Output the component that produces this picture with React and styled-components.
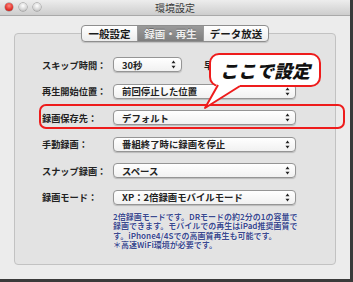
import React from "react";
import styled, { createGlobalStyle, css } from "styled-components";

const GlobalStyle = createGlobalStyle`
  html, body {
    margin: 0;
    padding: 0;
    background: #3a3a3a;
    font-family: "Noto Sans CJK JP", "Noto Sans", sans-serif;
  }
`;

const Window = styled.div`
  width: 350px;
  height: 279px;
  background: #ececec;
  display: flex;
  flex-direction: column;
  align-items: center;
  overflow: hidden;
`;

const TitleBar = styled.div`
  position: relative;
  width: 100%;
  height: 16px;
  display: flex;
  align-items: center;
  justify-content: center;
  background: linear-gradient(#ededed, #cdcdcd);
  border-bottom: 1px solid #a9a9a9;
  box-sizing: border-box;
`;

const Lights = styled.div`
  position: absolute;
  left: 5px;
  top: 3px;
  display: flex;
  gap: 6px;
`;

const Light = styled.span`
  width: 8px;
  height: 8px;
  border-radius: 50%;
  background: ${(p) =>
    p.$red
      ? "radial-gradient(circle at 50% 35%, #ff8a80, #e0302a 60%, #a5120e)"
      : "radial-gradient(circle at 50% 35%, #ffffff, #d4d4d4 60%, #9c9c9c)"};
  box-shadow: 0 0 0 0.5px #8a8a8a;
`;

const Title = styled.div`
  font-size: 10px;
  color: #3a3a3a;
`;

const Tabs = styled.div`
  position: relative;
  z-index: 2;
  display: flex;
  margin-top: 9px;
  height: 17px;
  border: 1px solid #8e8e8e;
  border-radius: 4px;
  box-sizing: border-box;
  background: linear-gradient(#ffffff, #ececec);
  box-shadow: 0 1px 1px rgba(0, 0, 0, 0.15);
  overflow: hidden;
`;

const Tab = styled.div`
  width: ${(p) => p.$w}px;
  display: flex;
  align-items: center;
  justify-content: center;
  font-size: 10.5px;
  font-weight: 700;
  color: #1a1a1a;
  & + & {
    border-left: 1px solid #9a9a9a;
  }
  ${(p) =>
    p.$active &&
    css`
      background: linear-gradient(#9a9a9a, #7e7e7e);
      color: #eeeeee;
      text-shadow: 0 -1px 0 rgba(0, 0, 0, 0.3);
    `}
`;

const Group = styled.div`
  position: relative;
  margin-top: -9px;
  width: 322px;
  height: 232px;
  box-sizing: border-box;
  padding: 23px 0 0 27px;
  background: #e3e3e3;
  border: 1px solid #c2c2c2;
  border-radius: 4px;
  display: flex;
  flex-direction: column;
  gap: 11.6px;
`;

const Row = styled.div`
  position: relative;
  display: flex;
  align-items: center;
  height: 15px;
  ${(p) =>
    p.$highlight &&
    css`
      &::before {
        content: "";
        position: absolute;
        left: -3px;
        right: -10px;
        top: -6px;
        bottom: -4px;
        border: 2px solid #ee1c1c;
        border-radius: 7px;
      }
    `}
`;

const Label = styled.div`
  width: 71px;
  flex: none;
  font-size: 9.2px;
  font-weight: 700;
  color: #222;
  white-space: nowrap;
`;

const SideLabel = styled(Label)`
  width: auto;
  margin-left: 22px;
`;

const Select = styled.div`
  width: ${(p) => p.$w}px;
  height: 15px;
  box-sizing: border-box;
  display: flex;
  align-items: center;
  justify-content: space-between;
  padding: 0 5px 0 8px;
  background: linear-gradient(#ffffff, #f1f1f1);
  border: 1px solid #959595;
  border-radius: 4px;
  box-shadow: 0 1px 1px rgba(0, 0, 0, 0.18);
  font-size: 9.4px;
  font-weight: 700;
  color: #222;
  white-space: nowrap;
`;

const Arrows = () => (
  <svg width="5" height="9" viewBox="0 0 5 9">
    <path d="M2.5 0.5 L4.5 3.3 L0.5 3.3 Z" fill="#222" />
    <path d="M2.5 8.5 L4.5 5.7 L0.5 5.7 Z" fill="#222" />
  </svg>
);

const Note = styled.div`
  margin: -5px 0 0 71px;
  width: 186px;
  font-size: 8px;
  line-height: 9.6px;
  font-weight: 700;
  color: #3b4a8e;
  text-shadow: 0 0 1px #fff, 0 0 1px #fff;
`;

const Bubble = styled.div`
  position: absolute;
  left: 194px;
  top: 19px;
  width: 112px;
  height: 34px;
  box-sizing: border-box;
  border: 2px solid #ee1c1c;
  border-radius: 10px;
  background: #fff;
  display: flex;
  align-items: center;
  justify-content: center;
  font-size: 18px;
  font-weight: 900;
  font-style: italic;
  color: #111;
  z-index: 3;
`;

const Tail = styled.svg`
  position: absolute;
  left: 185px;
  top: 46px;
  z-index: 4;
`;

const rows = [
  { label: "再生開始位置：", value: "前回停止した位置" },
  { label: "録画保存先：", value: "デフォルト", highlight: true },
  { label: "手動録画：", value: "番組終了時に録画を停止" },
  { label: "スナップ録画：", value: "スペース" },
  { label: "録画モード：", value: "XP：2倍録画モバイルモード" },
];

export default function App() {
  return (
    <>
      <GlobalStyle />
      <Window>
        <TitleBar>
          <Lights>
            <Light $red />
            <Light />
            <Light />
          </Lights>
          <Title>環境設定</Title>
        </TitleBar>
        <Tabs>
          <Tab $w={55}>一般設定</Tab>
          <Tab $w={65} $active>
            録画・再生
          </Tab>
          <Tab $w={64}>データ放送</Tab>
        </Tabs>
        <Group>
          <Row>
            <Label>スキップ時間：</Label>
            <Select $w={69}>
              30秒
              <Arrows />
            </Select>
            <SideLabel>早送り：</SideLabel>
          </Row>
          {rows.map((r) => (
            <Row key={r.label} $highlight={r.highlight}>
              <Label>{r.label}</Label>
              <Select $w={183}>
                {r.value}
                <Arrows />
              </Select>
            </Row>
          ))}
          <Note>
            2倍録画モードです。DRモードの約2分の1の容量で録画できます。モバイルでの再生はiPad推奨画質です。iPhone4/4Sでの高画質再生も可能です。
            <br />
            ＊高速WiFi環境が必要です。
          </Note>
          <Bubble>ここで設定</Bubble>
          <Tail width="45" height="32" viewBox="0 0 45 32">
            <path d="M18 2 L40 2 L40 6 L5 28 Z" fill="#fff" />
            <path d="M18 5 L5 28 L40 6" fill="none" stroke="#ee1c1c" strokeWidth="2" strokeLinejoin="round" />
          </Tail>
        </Group>
      </Window>
    </>
  );
}
